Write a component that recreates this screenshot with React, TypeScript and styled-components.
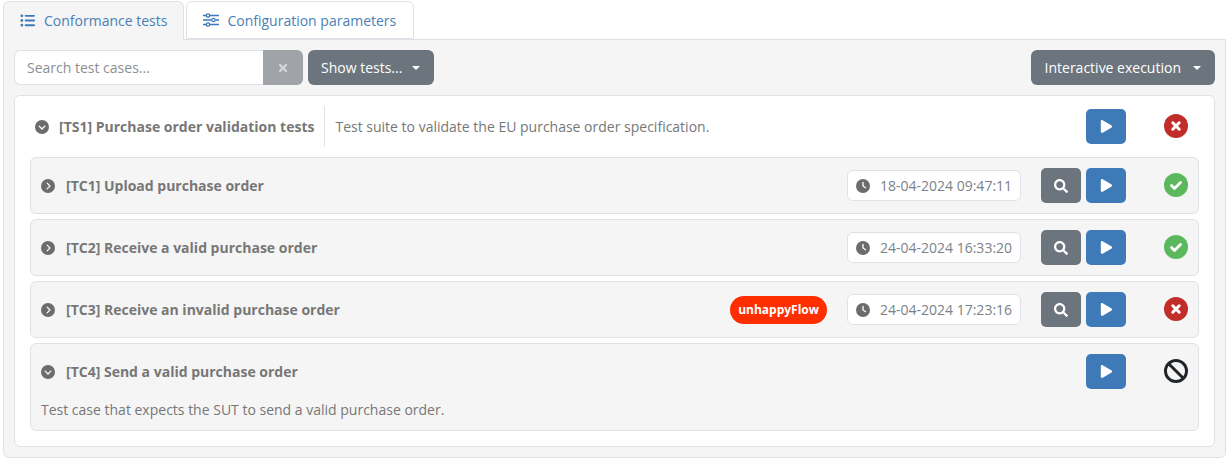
import styled, { createGlobalStyle } from 'styled-components';
import { FaPlay, FaSearch, FaTimes } from 'react-icons/fa';
import { FaBan, FaCircleChevronDown, FaCircleChevronRight, FaClock, FaListUl } from 'react-icons/fa6';

const GlobalStyle = createGlobalStyle`
  * { box-sizing: border-box; }
  body {
    margin: 0;
    background: #fff;
    font-family: "Open Sans", sans-serif;
    font-size: 14px;
    color: #777;
  }
`;

const Page = styled.div`
  width: 1228px;
  height: 460px;
  padding: 1px 2px 0 3px;
`;
const Tabs = styled.div`
  display: flex;
  gap: 2px;
  height: 38px;
  position: relative;
  z-index: 1;
`;
const Tab = styled.div<{ $active?: boolean }>`
  display: flex;
  align-items: center;
  gap: ${(p) => (p.$active ? 9 : 8)}px;
  height: ${(p) => (p.$active ? 39 : 38)}px;
  padding: 0 ${(p) => (p.$active ? 16 : 17)}px 0 16px;
  border: 1px solid #dee2e6;
  border-bottom-color: ${(p) => (p.$active ? '#f5f5f5' : '#dee2e6')};
  border-radius: 6px 6px 0 0;
  background: ${(p) => (p.$active ? '#f5f5f5' : '#fff')};
  color: #4a7fb5;
  svg { flex: none; color: #3f7ab8; }
`;
const Panel = styled.div`
  height: 419px;
  padding: 10px;
  background: #f5f5f5;
  border: 1px solid #dee2e6;
  border-radius: 0 0 6px 6px;
`;
const Toolbar = styled.div`
  display: flex;
  align-items: stretch;
  height: 35px;
  margin-bottom: 10px;
`;
const SearchInput = styled.div`
  width: 249px;
  display: flex;
  align-items: center;
  padding: 0 12px;
  background: #fff;
  border: 1px solid #dee2e6;
  border-right: 0;
  border-radius: 6px 0 0 6px;
  color: #8c9095;
`;
const ClearButton = styled.div`
  width: 40px;
  display: flex;
  align-items: center;
  justify-content: center;
  background: #a0a4a8;
  color: #d5d7d9;
  border-radius: 0 6px 6px 0;
  margin-right: 5px;
`;
const MenuButton = styled.div<{ $wide?: boolean }>`
  display: flex;
  align-items: center;
  gap: ${(p) => (p.$wide ? 12 : 10)}px;
  padding: 0 14px 0 ${(p) => (p.$wide ? 14 : 13)}px;
  background: #6c757d;
  color: #fff;
  border-radius: 6px;
  margin-left: ${(p) => (p.$wide ? 'auto' : 0)};
`;
const Caret = styled.span`
  width: 0;
  height: 0;
  border-top: 4px solid #fff;
  border-left: 4px solid transparent;
  border-right: 4px solid transparent;
`;
const Card = styled.div`
  height: 352px;
  padding: 0 15px 15px;
  background: #fff;
  border: 1px solid #dee2e6;
  border-radius: 6px;
`;
const SuiteHeader = styled.div`
  display: flex;
  align-items: center;
  height: 61px;
  padding-right: 11px;
`;
const SuiteTitle = styled.div`
  display: flex;
  align-items: center;
  height: 41px;
  padding: 0 10px 0 0;
  border-right: 1px solid #dee2e6;
  font-weight: 700;
`;
const Toggle = styled.span<{ $suite?: boolean }>`
  display: flex;
  margin: 0 ${(p) => (p.$suite ? 10 : 11)}px 0 ${(p) => (p.$suite ? 5 : 0)}px;
  color: #6c6c6c;
`;
const SuiteDescription = styled.div`
  margin-left: 10px;
  flex: 1;
`;
const Rows = styled.div`
  display: flex;
  flex-direction: column;
  gap: 5px;
`;
const Row = styled.div`
  padding: 10px;
  background: #f5f5f5;
  border: 1px solid #dee2e6;
  border-radius: 6px;
`;
const RowMain = styled.div`
  display: flex;
  align-items: center;
  height: 35px;
`;
const RowTitle = styled.div`
  flex: 1;
  display: flex;
  align-items: center;
  font-weight: 700;
`;
const RowDescription = styled.div`
  margin-top: 10px;
  height: 21px;
  line-height: 21px;
`;
const Badge = styled.span`
  display: flex;
  align-items: center;
  height: 28px;
  padding: 0 8px;
  margin-right: 20px;
  background: #ff2e00;
  color: #fff;
  border-radius: 14px;
  font-size: 12px;
  font-weight: 700;
`;
const DateBox = styled.div`
  display: flex;
  align-items: center;
  gap: 10px;
  width: 174px;
  height: 31px;
  padding: 0 8px;
  margin-right: 20px;
  background: #fff;
  border: 1px solid #dee2e6;
  border-radius: 6px;
  color: #7b8289;
  white-space: nowrap;
  svg { color: #6c6c6c; flex: none; }
`;
const ActionButton = styled.div<{ $kind: 'search' | 'play' }>`
  width: 40px;
  height: 35px;
  display: flex;
  align-items: center;
  justify-content: center;
  margin-left: ${(p) => (p.$kind === 'play' ? 5 : 0)}px;
  background: ${(p) => (p.$kind === 'play' ? '#3f7ab8' : '#6c757d')};
  color: #fff;
  border-radius: 5px;
`;
const Status = styled.div`
  width: 24px;
  height: 24px;
  margin: -1px 0 0 38px;
  display: flex;
  align-items: center;
  justify-content: center;
`;

type StatusKind = 'failed' | 'passed' | 'ignored';

const StatusIcon = ({ kind }: { kind: StatusKind }) => (
  <Status>
    {kind === 'failed' && (
      <svg width="24" height="24" viewBox="0 0 24 24" fill="none" stroke="#fff" strokeWidth="3" strokeLinecap="round">
        <circle cx="12" cy="12" r="12" fill="#c12e2a" stroke="none" />
        <path d="M8.8 8.8l6.4 6.4M15.2 8.8l-6.4 6.4" />
      </svg>
    )}
    {kind === 'passed' && (
      <svg width="24" height="24" viewBox="0 0 24 24" fill="none" stroke="#fff" strokeWidth="2.8" strokeLinecap="round" strokeLinejoin="round">
        <circle cx="12" cy="12" r="12" fill="#5cb85c" stroke="none" />
        <path d="M7.5 12.5l3 3 6-6" />
      </svg>
    )}
    {kind === 'ignored' && <FaBan size={24} color="#212529" />}
  </Status>
);

const SlidersIcon = () => (
  <svg width="16" height="14" viewBox="0 0 16 14" fill="none" stroke="currentColor" strokeWidth="1.3">
    <path d="M0 2.5h3M7 2.5h9M0 7h8.5M12.5 7H16M0 11.5h3M7 11.5h9" />
    <circle cx="5" cy="2.5" r="1.7" />
    <circle cx="10.5" cy="7" r="1.7" />
    <circle cx="5" cy="11.5" r="1.7" />
  </svg>
);

const cases = [
  { title: '[TC1] Upload purchase order', date: '18-04-2024 09:47:11', status: 'passed' as StatusKind },
  { title: '[TC2] Receive a valid purchase order', date: '24-04-2024 16:33:20', status: 'passed' as StatusKind },
  {
    title: '[TC3] Receive an invalid purchase order',
    date: '24-04-2024 17:23:16',
    status: 'failed' as StatusKind,
    badge: 'unhappyFlow',
  },
];

export default function App() {
  return (
    <Page>
      <GlobalStyle />
      <Tabs>
        <Tab $active>
          <FaListUl size={15} />
          Conformance tests
        </Tab>
        <Tab>
          <SlidersIcon />
          Configuration parameters
        </Tab>
      </Tabs>
      <Panel>
        <Toolbar>
          <SearchInput>Search test cases...</SearchInput>
          <ClearButton>
            <FaTimes size={12} />
          </ClearButton>
          <MenuButton>
            Show tests...
            <Caret />
          </MenuButton>
          <MenuButton $wide>
            Interactive execution
            <Caret />
          </MenuButton>
        </Toolbar>
        <Card>
          <SuiteHeader>
            <Toggle $suite>
              <FaCircleChevronDown size={14} />
            </Toggle>
            <SuiteTitle>[TS1] Purchase order validation tests</SuiteTitle>
            <SuiteDescription>Test suite to validate the EU purchase order specification.</SuiteDescription>
            <ActionButton $kind="play">
              <FaPlay size={13} />
            </ActionButton>
            <StatusIcon kind="failed" />
          </SuiteHeader>
          <Rows>
            {cases.map((c) => (
              <Row key={c.title}>
                <RowMain>
                  <RowTitle>
                    <Toggle>
                      <FaCircleChevronRight size={14} />
                    </Toggle>
                    {c.title}
                  </RowTitle>
                  {c.badge && <Badge>{c.badge}</Badge>}
                  <DateBox>
                    <FaClock size={14} />
                    {c.date}
                  </DateBox>
                  <ActionButton $kind="search">
                    <FaSearch size={14} />
                  </ActionButton>
                  <ActionButton $kind="play">
                    <FaPlay size={13} />
                  </ActionButton>
                  <StatusIcon kind={c.status} />
                </RowMain>
              </Row>
            ))}
            <Row>
              <RowMain>
                <RowTitle>
                  <Toggle>
                    <FaCircleChevronDown size={14} />
                  </Toggle>
                  [TC4] Send a valid purchase order
                </RowTitle>
                <ActionButton $kind="play">
                  <FaPlay size={13} />
                </ActionButton>
                <StatusIcon kind="ignored" />
              </RowMain>
              <RowDescription>Test case that expects the SUT to send a valid purchase order.</RowDescription>
            </Row>
          </Rows>
        </Card>
      </Panel>
    </Page>
  );
}
